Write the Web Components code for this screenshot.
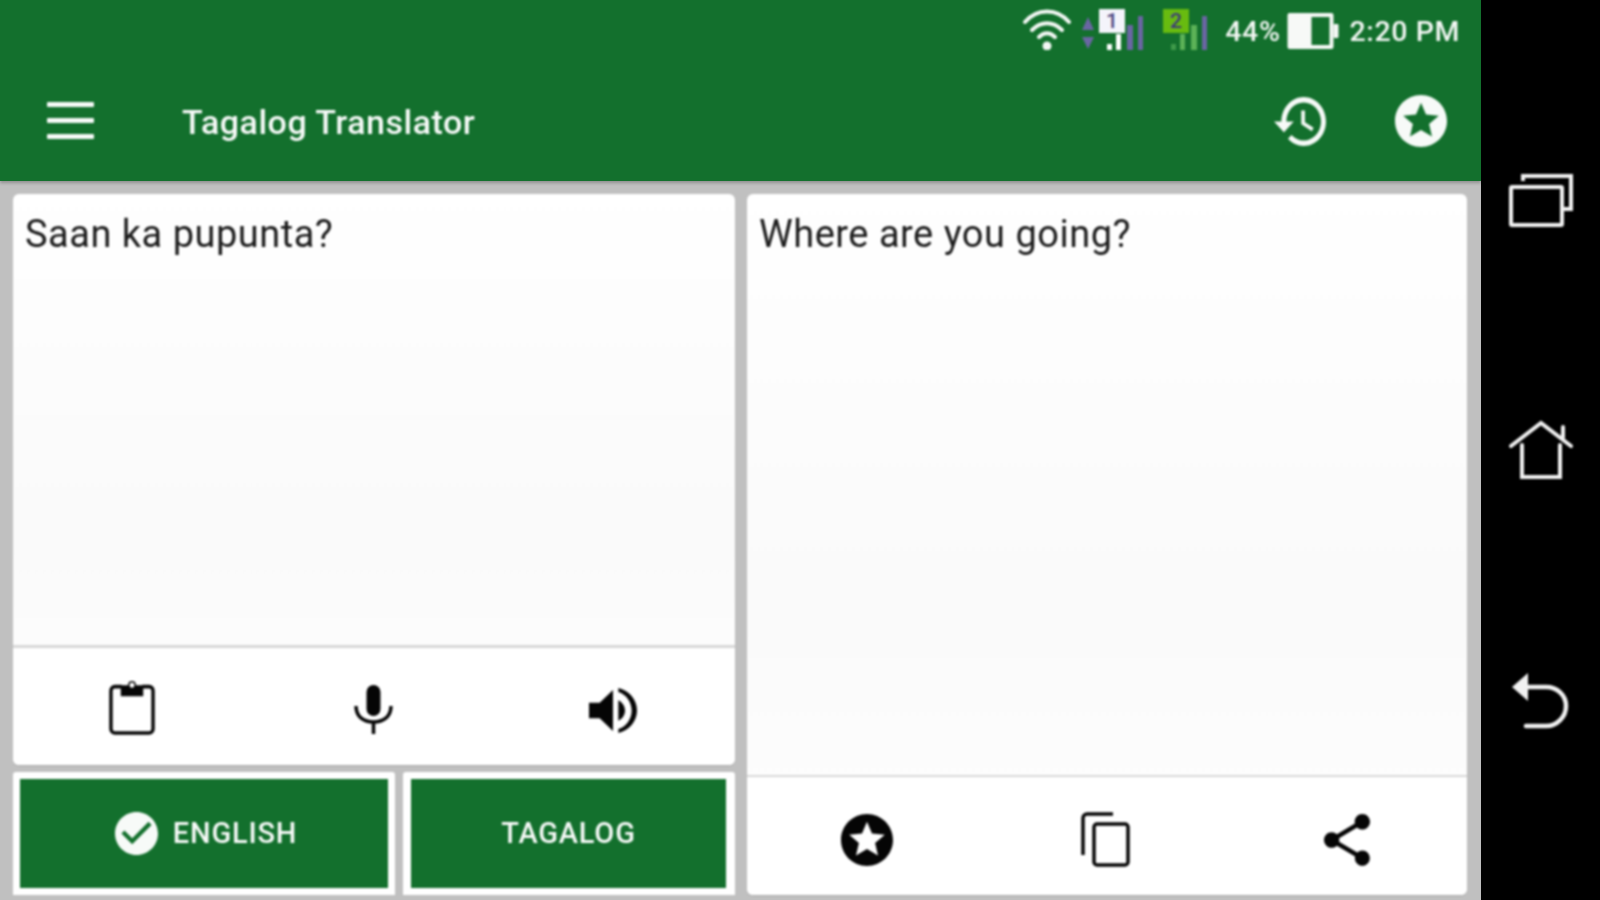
<!DOCTYPE html>
<html lang="en"><head><meta charset="utf-8"><title>Tagalog Translator</title>
<style>
html,body{margin:0;height:100%;overflow:hidden;background:#000;font-family:Roboto,"Liberation Sans",sans-serif}
</style></head><body>
<phone-screen>
  <status-bar slot="status"></status-bar>
  <app-toolbar slot="toolbar" title-text="Tagalog Translator"></app-toolbar>
  <translate-card slot="source" divider="3" actions="clipboard mic volume" action-h="120" pad="5">Saan ka pupunta?</translate-card>
  <lang-button slot="lang-a" checked style="flex:0 0 382px">ENGLISH</lang-button>
  <lang-button slot="lang-b" style="flex:1;padding:7px 9px 7px 8px">TAGALOG</lang-button>
  <translate-card slot="target" divider="2" actions="starblack copy share" action-h="120" pad="7">Where are you going?</translate-card>
  <nav-rail slot="nav"></nav-rail>
</phone-screen>
<script>
const P={
 star:["2 2 20 20",'<path fill="currentColor" d="M11.99 2C6.47 2 2 6.48 2 12s4.47 10 9.99 10C17.52 22 22 17.52 22 12S17.52 2 11.99 2zm4.24 16L12 15.45 7.77 18l1.12-4.81-3.73-3.23 4.92-.42L12 5l1.92 4.53 4.92.42-3.73 3.23L16.23 18z"/>'],
 history:["1 3 21 18",'<path fill="currentColor" d="M13 3c-4.97 0-9 4.03-9 9H1l3.89 3.89.07.14L9 12H6c0-3.87 3.13-7 7-7s7 3.13 7 7-3.13 7-7 7c-1.93 0-3.68-.79-4.94-2.06l-1.42 1.42C8.27 19.99 10.51 21 13 21c4.97 0 9-4.03 9-9s-4.03-9-9-9zm-1 5v5l4.28 2.54.72-1.21-3.5-2.08V8H12z"/>'],
 check:["2 2 20 20",'<path fill="currentColor" d="M12 2C6.48 2 2 6.48 2 12s4.48 10 10 10 10-4.48 10-10S17.52 2 12 2zm-2 15l-5-5 1.41-1.41L10 14.17l7.59-7.59L19 8l-9 9z"/>'],
 mic:["0 0 39 49",'<rect x="12.500" y="0" width="14" height="31" rx="7" fill="currentColor"/><path fill="none" stroke="currentColor" stroke-width="3.500" d="M2 21c0 11 8 16 17.500 16S37 32 37 21M19.500 37v12"/>'],
 volume:["3 3.2 18 17.6",'<path fill="currentColor" d="M3 9v6h4l5 5V4L7 9H3zm13.5 3c0-1.77-1.02-3.29-2.5-4.03v8.05c1.48-.73 2.5-2.25 2.5-4.02zM14 3.23v1.5c2.89.86 5 3.94 5 7.27s-2.11 6.41-5 7.27v1.5c4.01-.91 7-4.49 7-8.77s-2.99-7.86-7-8.77z"/>'],
 share:["3 2 18 20",'<path fill="currentColor" d="M18 16.08c-.76 0-1.44.3-1.96.77L8.91 12.7c.05-.23.09-.46.09-.7s-.04-.47-.09-.7l7.05-4.11c.54.5 1.25.81 2.04.81 1.66 0 3-1.34 3-3s-1.34-3-3-3-3 1.34-3 3c0 .24.04.47.09.7L8.04 9.81C7.5 9.31 6.79 9 6 9c-1.66 0-3 1.34-3 3s1.34 3 3 3c.79 0 1.5-.31 2.04-.81l7.12 4.16c-.05.21-.08.43-.08.65 0 1.61 1.31 2.92 2.92 2.92 1.61 0 2.92-1.31 2.92-2.92s-1.31-2.92-2.92-2.92z"/>'],
 clipboard:["0 0 47 56",'<path fill="none" stroke="currentColor" stroke-width="3.500" d="M13 8.500H6a4 4 0 0 0-4 4V50a4 4 0 0 0 4 4h35a4 4 0 0 0 4-4V12.500a4 4 0 0 0-4-4h-7"/><path fill="currentColor" fill-rule="evenodd" d="M12 7h7.500a4 4 0 0 1 8 0H35v11H12zM23.500 4.500a2.500 2.500 0 1 0 .01 0z"/>'],
 copy:["0 0 49 55",'<path fill="none" stroke="currentColor" stroke-width="3.500" d="M32 2H6a4 4 0 0 0-4 4v37"/><rect x="13" y="12" width="34" height="41" rx="3" fill="none" stroke="currentColor" stroke-width="3.500"/>'],
 recents:["0 0 64 54",'<path fill="none" stroke="currentColor" stroke-width="4" d="M14 8V3h48v33h-8"/><rect x="2" y="14" width="51" height="38" rx="1" fill="none" stroke="currentColor" stroke-width="4"/>'],
 home:["0 0 64 60",'<path fill="none" stroke="currentColor" stroke-width="4" stroke-linecap="round" d="M2 26 32 3l30 23M54 18V7M13 25v32h38V25"/>'],
 back:["0 0 58 56",'<path fill="currentColor" d="M0 14 16 0v28z"/><path fill="none" stroke="currentColor" stroke-width="4.500" stroke-linecap="round" d="M14 14h20c11 0 20 8 20 19s-9 20-20 20H14"/>']
};
function def(name,fn){customElements.define(name,class extends HTMLElement{constructor(){super();this.attachShadow({mode:"open"})}connectedCallback(){this.shadowRoot.innerHTML=fn(this)}})}
def("ui-icon",e=>{const v=P[e.getAttribute("name")];
 return `<style>:host{display:block;width:${e.getAttribute("w")}px;height:${e.getAttribute("h")}px;color:inherit}svg{display:block;width:100%;height:100%;overflow:visible}</style><svg viewBox="${v[0]}" preserveAspectRatio="none">${v[1]}</svg>`});
def("phone-screen",()=>`<style>
:host{display:flex;width:1600px;height:900px;background:#000}
.app{width:1481px;display:flex;flex-direction:column;background:#c0c0c0;overflow:hidden}
.head{background:#13702d;height:181px;flex:none;box-shadow:0 2px 3px rgba(0,0,0,.25);position:relative}
.head-in{height:100%;display:flex;flex-direction:column;filter:blur(.85px)}
.body{flex:1;display:grid;grid-template-columns:722px 720px;gap:12px;padding:13px 14px 5px 13px;min-height:0;filter:blur(.85px)}
.left{display:flex;flex-direction:column;gap:7px;min-height:0}
.top{flex:0 0 571px;display:flex}
.langs{flex:1;display:flex;gap:8px}
.nav{flex:1;display:flex;filter:blur(.8px)}
</style>
<div class="app"><div class="head"><div class="head-in"><slot name="status"></slot><slot name="toolbar"></slot></div></div>
<div class="body"><div class="left"><div class="top"><slot name="source"></slot></div><div class="langs"><slot name="lang-a"></slot><slot name="lang-b"></slot></div></div><slot name="target"></slot></div></div>
<div class="nav"><slot name="nav"></slot></div>`);
def("sim-signal",e=>{const[n,badge,ink]=[e.getAttribute("n"),e.getAttribute("badge"),e.getAttribute("ink")];
 const c=(e.getAttribute("bars")||"").split(",");
 const H=[6,16,25,34],W=[5,5,6,5],G=[4,6,5];
 return `<style>:host{display:block;position:relative;width:${e.getAttribute("w")}px;height:48px}
 .b{position:absolute;left:0;top:7px;width:26px;height:24px;background:${badge};color:${ink};font:500 21px/24px Roboto,sans-serif;text-align:center}
 .bars{position:absolute;left:8px;bottom:0;display:flex;align-items:flex-end}
 i{display:block}</style><span class="b">${n}</span><div class="bars">${H.map((h,i)=>`<i style="height:${h}px;width:${W[i]}px;background:${c[i]};margin-right:${G[i]||0}px"></i>`).join("")}</div>`});
def("status-bar",()=>`<style>
:host{display:flex;height:62px;flex:none;color:#f4f8f5;font:500 28.500px/1 Roboto,sans-serif;letter-spacing:.6px}
.row{margin-left:auto;display:flex;align-items:flex-start;padding:2px 21px 0 0;letter-spacing:inherit}
svg{display:block;flex:none}
.t{height:48px;padding-top:16px;box-sizing:border-box;line-height:28px}
</style><div class="row">
<svg width="50" height="48" viewBox="0 0 50 48" style="margin-right:10px"><g fill="none" stroke="#f4f8f5" stroke-width="4" stroke-linecap="round"><path d="M3 20C15 6 35 6 47 20"/><path d="M10 28c9-9 21-9 30 0"/><path d="M17 35c5-5 11-5 16 0"/></g><circle cx="25" cy="44" r="4.500" fill="#f4f8f5"/></svg>
<svg width="12" height="48" viewBox="0 0 12 48" style="margin-right:5px"><path fill="#6a66a3" d="M6 15l6 13H0zM0 35h12l-6 12z"/></svg>
<sim-signal n="1" badge="#f4f4fb" ink="#4a447e" bars="#fff,#fff,#6a66a3,#6a66a3" w="44" style="margin-right:20px"></sim-signal>
<sim-signal n="2" badge="#68bb10" ink="#3c3c78" bars="#3f9a4a,#5cb257,#5cb257,#6a66a3" w="45" style="margin-right:17px"></sim-signal>
<span class="t" style="margin-right:7px">44%</span>
<svg width="52" height="36" viewBox="0 0 51 36" style="margin:11px 10px 0 0"><path fill="#f7f9f7" fill-rule="evenodd" d="M2 0h42a2 2 0 0 1 2 2v32a2 2 0 0 1-2 2H2a2 2 0 0 1-2-2V2a2 2 0 0 1 2-2zm22 4v28h18V4z"/><rect x="46" y="11" width="5" height="14" rx="1" fill="#f7f9f7"/></svg>
<span class="t">2:20 PM</span></div>`);
def("app-toolbar",e=>`<style>
:host{display:flex;flex:1;align-items:center;color:#f7faf8;padding:0 34px 0 47px}
.menu{display:flex;flex-direction:column;gap:11px;width:47px;margin-right:88px;margin-top:-3px}
.menu i{display:block;height:5px;background:#f7faf8;border-radius:1px}
.title{font:500 34px/1 Roboto,sans-serif;letter-spacing:.5px;flex:1;margin-top:1px}
ui-icon{margin-top:-1px}
</style><div class="menu"><i></i><i></i><i></i></div><span class="title">${e.getAttribute("title-text")}</span>
<ui-icon name="history" w="52" h="49" style="margin-right:69px"></ui-icon><ui-icon name="star" w="52" h="52"></ui-icon>`);
const SZ={clipboard:[46,57],mic:[39,49],volume:[48,45],starblack:[52,52],copy:[49,55],share:[46,52]};
const OFF={clipboard:"translate(-1px,-3px)",volume:"translate(-2px,1px)",copy:"translate(-2px,0)"};
def("translate-card",e=>{const a=e.getAttribute("actions").split(" ");
 return `<style>
:host{display:flex;flex-direction:column;flex:1;min-width:0;background:linear-gradient(#fff,#fafafa 60%,#fff);border-radius:6px;overflow:hidden;color:#1c1c1c;box-shadow:0 1px 1px rgba(0,0,0,.12)}
.text{flex:1;padding:16px 12px;font:400 38px/48px Roboto,sans-serif;letter-spacing:.5px}
.acts{flex:0 0 ${e.getAttribute("action-h")}px;background:#fff;border-top:${e.getAttribute("divider")}px solid #d8d8d8;padding-top:${e.getAttribute("pad")||0}px;box-sizing:border-box;display:grid;grid-template-columns:repeat(3,1fr);place-items:center;color:#050505}
</style><div class="text"><slot></slot></div><div class="acts">${a.map(n=>{const s=SZ[n];return `<ui-icon name="${n==="starblack"?"star":n}" w="${s[0]}" h="${s[1]}" style="transform:${OFF[n]||"none"}"></ui-icon>`}).join("")}</div>`});
def("lang-button",e=>`<style>
:host{display:flex;background:#fff;padding:7px;box-sizing:border-box;border-radius:3px 3px 0 0;min-width:0}
.b{flex:1;background:#13702d;color:#f7faf8;display:flex;align-items:center;justify-content:center;gap:15px;font:500 29px/1 Roboto,sans-serif;letter-spacing:.8px;height:109px}
.in{display:flex;align-items:center;gap:15px;transform:translateX(${e.hasAttribute("checked")?2:0}px)}
</style><div class="b"><div class="in">${e.hasAttribute("checked")?'<ui-icon name="check" w="43" h="43"></ui-icon>':''}<span><slot></slot></span></div></div>`);
def("nav-rail",()=>`<style>
:host{display:flex;flex-direction:column;align-items:center;width:119px;height:900px;color:#f2f2f2;padding-top:173px;box-sizing:border-box}
ui-icon{flex:none}
</style><ui-icon name="recents" w="64" h="54" style="margin-bottom:193px"></ui-icon><ui-icon name="home" w="64" h="60" style="margin-bottom:193px"></ui-icon><ui-icon name="back" w="58" h="56"></ui-icon>`);
</script>
</body></html>
